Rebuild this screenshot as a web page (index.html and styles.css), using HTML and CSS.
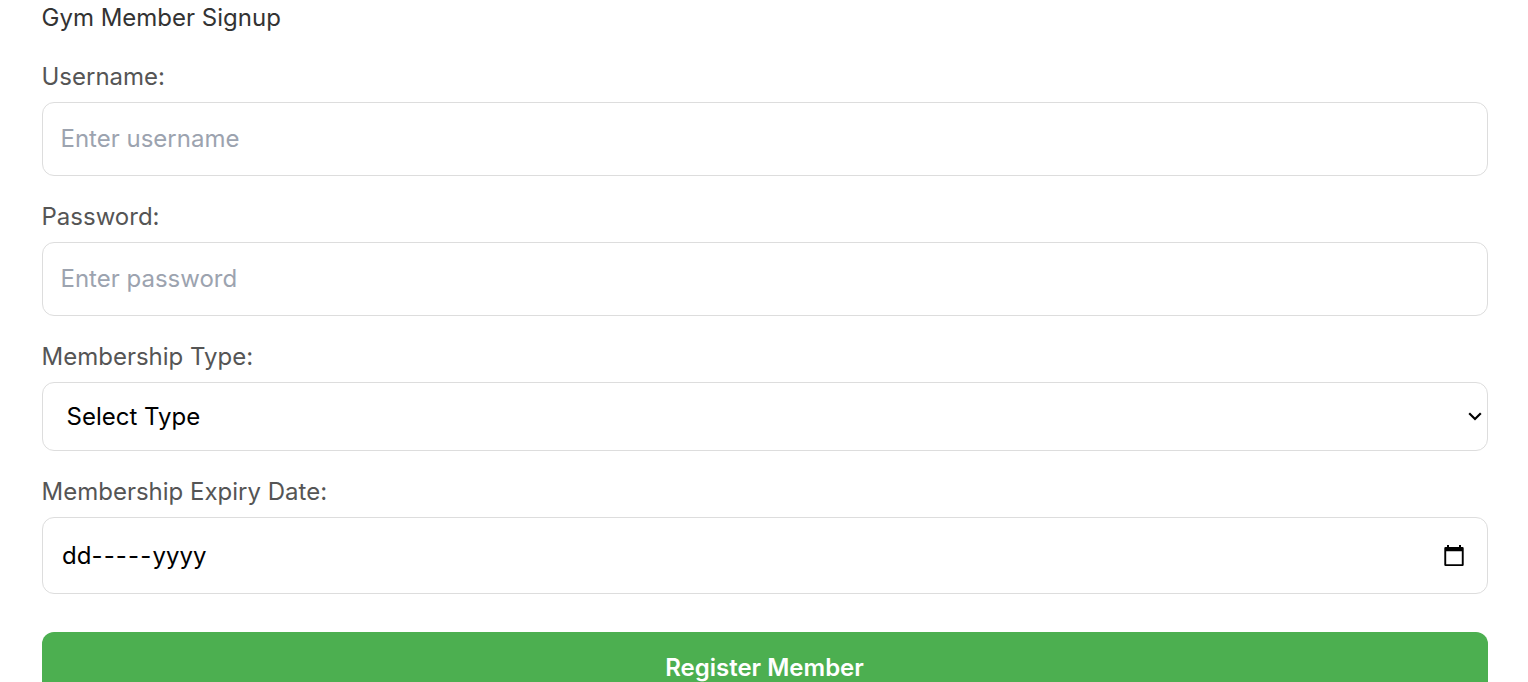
FILE: index.html
```html
<!DOCTYPE html>
<html lang="en">
<head>
<meta charset="utf-8">
<title>Gym Member Signup</title>
<link rel="stylesheet" href="styles.css">
</head>
<body>
<form class="signup">
  <h1 class="title">Gym Member Signup</h1>
  <label class="label" for="username">Username:</label>
  <input class="field" id="username" type="text" placeholder="Enter username">
  <label class="label" for="password">Password:</label>
  <input class="field" id="password" type="password" placeholder="Enter password">
  <label class="label" for="type">Membership Type:</label>
  <div class="field picker select" id="type">
    <span>Select Type</span>
    <svg class="chevron" viewBox="0 0 14 10" aria-hidden="true"><path d="M1.2 1.2 7 7 12.8 1.2"/></svg>
  </div>
  <label class="label" for="expiry">Membership Expiry Date:</label>
  <div class="field picker date" id="expiry">
    <span>dd<span class="dashes">-----</span>yyyy</span>
    <svg class="calendar" viewBox="0 0 20 22" aria-hidden="true"><path fill-rule="evenodd" d="M3 0h2v2h10V0h2v2h1.500a1.200 1.200 0 0 1 1.200 1.200v16.600a1.200 1.200 0 0 1-1.200 1.200H1.500a1.200 1.200 0 0 1-1.200-1.200V3.200A1.200 1.200 0 0 1 1.500 2H3zM2.200 6.300v12.900h15.600V6.300z"/></svg>
  </div>
  <button class="submit" type="button">Register Member</button>
</form>
</body>
</html>
```
FILE: styles.css
```css
* { box-sizing: border-box; }
body { margin: 0; background: #fff; font-family: Inter, sans-serif; font-size: 24px; overflow: hidden; }
.signup { display: flex; flex-direction: column; padding: 0 40px 0 42px; }
.title { margin: 0; height: 59px; line-height: 36px; font-size: 24px; font-weight: 400; color: #333; text-indent: -0.5px; }
.label { height: 43px; line-height: 36px; color: #555; text-indent: -0.5px; }
.field { height: 74px; margin: 0 0 23px; padding: 0 17.5px 2px; border: 1px solid #ddd; border-radius: 12px; background: #fff; color: #000; font: inherit; }
.field::placeholder { color: #9ca3af; opacity: 1; }
.picker { display: flex; align-items: center; justify-content: space-between; }
.select { height: 69px; padding: 0 5px 0 23.5px; }
.date { height: 77px; margin-bottom: 38px; padding: 0 23px 0 19px; }
.dashes { letter-spacing: 1.2px; }
.chevron { width: 14px; height: 10px; fill: none; stroke: #000; stroke-width: 2.2; }
.calendar { width: 20px; height: 22px; }
.submit { height: 73px; padding: 0 1px 2px 0; border: 0; border-radius: 12px; background: #4caf50; color: #fff; font: 600 24px/30px Inter, sans-serif; }
```
